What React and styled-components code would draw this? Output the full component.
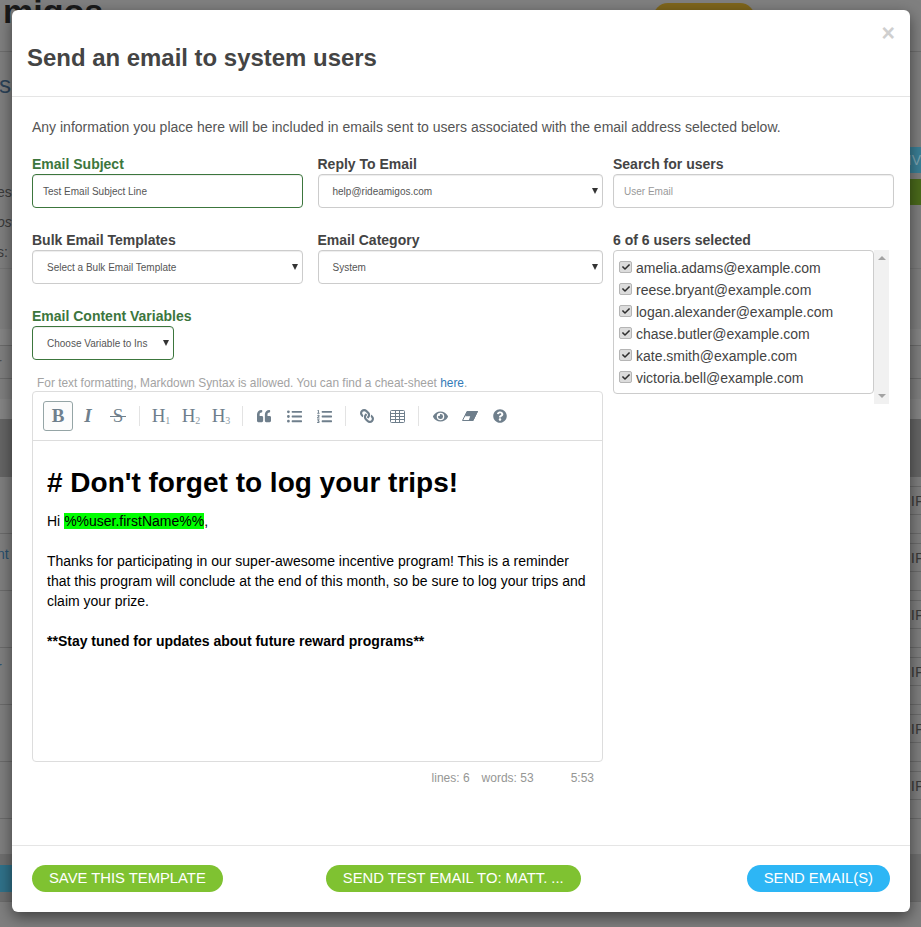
import React from "react";
import styled, { createGlobalStyle } from "styled-components";
import {
  FaQuoteLeft,
  FaListUl,
  FaListOl,
  FaLink,
  FaEye,
  FaQuestionCircle,
  FaCheck,
} from "react-icons/fa";

const Global = createGlobalStyle`
  html, body { margin: 0; padding: 0; }
  body { font-family: "Liberation Sans", Arial, sans-serif; }
  * { box-sizing: border-box; }
`;

const Page = styled.div`
  position: relative;
  width: 921px;
  height: 927px;
  overflow: hidden;
  background: #7f7f7f;
  color: #333;
`;

const TopBar = styled.div`
  height: 52px;
  border-bottom: 1px solid #6e6e6e;
  background: #808080;
  display: flex;
  align-items: flex-start;
  justify-content: space-between;
  padding: 3px 166px 0 3px;
`;

const BrandText = styled.div`
  font-size: 34px;
  line-height: 34px;
  font-weight: 700;
  margin-top: -9px;
  color: #1a1a1a;
`;

const YellowButton = styled.div`
  width: 102px;
  height: 30px;
  border-radius: 15px;
  background: #7f661c;
`;

const BackRow = styled.div`
  height: ${(p) => p.$h}px;
  display: flex;
  justify-content: space-between;
  align-items: flex-start;
  padding-top: ${(p) => p.$pad || 0}px;
  background: ${(p) => p.$bg || "transparent"};
  border-bottom: ${(p) => (p.$line ? `1px solid ${p.$line}` : "0")};
  overflow: hidden;
`;

const BackCrumb = styled.span`
  font-size: 24px;
  line-height: 28px;
  color: #2b4258;
  margin-left: -1px;
`;

const BackText = styled.div`
  font-size: 14px;
  line-height: 30px;
  color: #3b3b3b;
  margin-left: -3px;
  font-style: ${(p) => (p.$italic ? "italic" : "normal")};
`;

const BackLink = styled.span`
  font-size: 14px;
  line-height: 20px;
  color: #27506f;
  margin: ${(p) => p.$top}px 0 0 -3px;
`;

const BackStack = styled.div`
  display: flex;
  flex-direction: column;
`;

const BackAction = styled.div`
  width: 40px;
  height: 26px;
  margin-bottom: 6px;
  text-align: right;
  font-size: 14px;
  line-height: 26px;
  padding-right: 0;
  color: #7fa6b3;
  background: ${(p) => p.$bg};
  white-space: nowrap;
  overflow: hidden;
`;

const BackCell = styled.div`
  width: 40px;
  height: 29px;
  margin-top: 9px;
  border-top: 1px solid #6b6b6b;
  border-bottom: 1px solid #6b6b6b;
  display: flex;
  justify-content: flex-end;
  font-size: 15px;
  line-height: 27px;
  color: #3a3a3a;
  span { margin-right: -4px; }
`;

const BackBadge = styled.div`
  width: 40px;
  height: 27px;
  margin-top: 11px;
  background: #30728a;
  color: #75a5b5;
  font-size: 14px;
  line-height: 27px;
  text-align: right;
  overflow: hidden;
  white-space: nowrap;
`;

const ModalBox = styled.div`
  position: absolute;
  left: 12px;
  top: 10px;
  width: 898px;
  height: 902px;
  display: flex;
  flex-direction: column;
  background: #fff;
  border-radius: 6px;
  box-shadow: 0 5px 15px rgba(0, 0, 0, 0.5);
`;

const ModalHeader = styled.div`
  position: relative;
  height: 87px;
  flex: none;
  padding: 33px 15px 0;
  border-bottom: 1px solid #e5e5e5;
`;

const Title = styled.h4`
  margin: 0;
  font-size: 23.95px;
  line-height: 30px;
  font-weight: 700;
  color: #444;
`;

const Close = styled.span`
  position: absolute;
  top: 13px;
  right: 15px;
  font-size: 23px;
  line-height: 21px;
  font-weight: 700;
  color: #cfcfcf;
`;

const ModalBody = styled.div`
  flex: 1;
  padding: 20px 20px 0;
`;

const Intro = styled.p`
  margin: 0;
  font-size: 14px;
  line-height: 20px;
  color: #555;
`;

const TopGrid = styled.div`
  display: grid;
  grid-template-columns: 271px 285.5px 276px;
  column-gap: 14.5px;
  margin-top: 18px;
  & > :nth-child(3n) { margin-left: -4.5px; }
`;

const Field = styled.div`
  display: flex;
  flex-direction: column;
  height: ${(p) => p.$h || 76}px;
`;

const Label = styled.label`
  font-size: 14px;
  line-height: 16px;
  font-weight: 700;
  margin: 1px 0 2px;
  color: ${(p) => (p.$green ? "#3c763d" : "#444")};
`;

const Control = styled.div`
  position: relative;
  width: ${(p) => p.$width || "100%"};
  height: 34px;
  flex: none;
  padding: 0 ${(p) => (p.$select ? "14px" : "10px")};
  display: flex;
  align-items: center;
  font-size: 10px;
  color: ${(p) => p.$color || "#555"};
  background: #fff;
  border: 1px solid ${(p) => (p.$green ? "#3c763d" : "#ccc")};
  border-radius: 4px;
  box-shadow: inset 0 1px 1px rgba(0, 0, 0, 0.075);
  white-space: nowrap;
  overflow: hidden;
`;

const Arrow = styled.span`
  position: absolute;
  right: 4px;
  top: 13px;
  width: 0;
  height: 0;
  border-left: 3px solid transparent;
  border-right: 3px solid transparent;
  border-top: 6px solid #333;
`;

const ListWrap = styled.div`
  display: flex;
  flex: none;
  width: 276px;
  height: 154px;
`;

const UserList = styled.div`
  width: 261px;
  height: 144px;
  border: 1px solid #ccc;
  border-radius: 4px;
  padding: 6px 0 0 5px;
`;

const UserRow = styled.label`
  display: flex;
  align-items: flex-start;
  height: 22px;
  font-size: 14px;
  line-height: 22px;
  color: #444;
`;

const Check = styled.span`
  width: 13px;
  height: 12px;
  margin: 4px 4px 0 0;
  flex: none;
  display: flex;
  align-items: center;
  justify-content: center;
  border: 1px solid #b5b5b5;
  border-radius: 2px;
  background: #dcdcdc;
  color: #2e2e2e;
`;

const ScrollTrack = styled.div`
  width: 15px;
  background: #f1f1f1;
  display: flex;
  flex-direction: column;
  justify-content: space-between;
  align-items: center;
  padding: 6px 0;
`;

const ScrollArrow = styled.span`
  width: 0;
  height: 0;
  border-left: 4px solid transparent;
  border-right: 4px solid transparent;
  border-${(p) => (p.$up ? "bottom" : "top")}: 4px solid #a3a3a3;
`;

const RowTwo = styled.div`
  display: grid;
  grid-template-columns: 571px 276px;
  column-gap: 10px;
`;

const LeftCol = styled.div`
  display: flex;
  flex-direction: column;
`;

const RowTwoInner = styled.div`
  display: grid;
  grid-template-columns: 271px 285.5px;
  column-gap: 14.5px;
`;

const Hint = styled.div`
  margin-left: 5px;
  font-size: 11.9px;
  line-height: 14px;
  height: 15px;
  color: #a3a3a3;
  a { color: #337ab7; text-decoration: none; }
`;

const Editor = styled.div`
  width: 571px;
  height: 371px;
  border: 1px solid #ddd;
  border-radius: 4px;
  display: flex;
  flex-direction: column;
`;

const Toolbar = styled.div`
  height: 49px;
  flex: none;
  border-bottom: 1px solid #ddd;
  display: flex;
  align-items: center;
  padding: 0 10px;
  color: #6f7f8c;
`;

const ToolButton = styled.div`
  position: relative;
  width: 30px;
  height: 30px;
  flex: none;
  display: flex;
  align-items: center;
  justify-content: center;
  border-radius: 3px;
  border: 1px solid ${(p) => (p.$active ? "#95a5a6" : "transparent")};
  background: ${(p) => (p.$active ? "#fcfcfc" : "transparent")};
  font-family: "Liberation Serif", "DejaVu Serif", serif;
  font-size: 19px;
  font-weight: ${(p) => (p.$bold ? 700 : 400)};
  font-style: ${(p) => (p.$italic ? "italic" : "normal")};
  svg { display: block; }
`;

const StrikeLine = styled.span`
  position: absolute;
  left: 6px;
  right: 6px;
  top: 14px;
  height: 1px;
  background: currentColor;
`;

const HeadGlyph = styled.span`
  white-space: nowrap;
  sub { font-size: 10px; line-height: 0; vertical-align: -2px; opacity: 0.8; }
`;

const Separator = styled.span`
  width: 1px;
  height: 20px;
  flex: none;
  background: #e3e3e3;
  margin: 0 6px;
`;

const EditorBody = styled.div`
  flex: 1;
  padding: 24px 14px 0;
  color: #000;
  font-size: 14px;
  line-height: 20px;
`;

const Heading = styled.div`
  font-size: 28px;
  line-height: 36px;
  font-weight: 700;
  margin-bottom: 10px;
`;

const Line = styled.div`
  min-height: 20px;
  font-weight: ${(p) => (p.$bold ? 700 : 400)};
`;

const Mark = styled.span`
  background: #00ff00;
`;

const StatusBar = styled.div`
  display: flex;
  justify-content: flex-end;
  width: 571px;
  padding: 9px 9px 0 0;
  font-size: 12px;
  line-height: 14px;
  color: #959694;
`;

const Stat = styled.span`
  margin-left: ${(p) => p.$gap || 12}px;
`;

const ModalFooter = styled.div`
  height: 67px;
  flex: none;
  border-top: 1px solid #e5e5e5;
  display: flex;
  align-items: center;
  padding: 0 20px 2px;
`;

const PillButton = styled.button`
  height: 27px;
  padding: 0 17px;
  margin-left: ${(p) => p.$ml || "0"};
  border: 0;
  border-radius: 14px;
  background: ${(p) => (p.$blue ? "#2db6f5" : "#7fc231")};
  color: #fff;
  font-family: "Liberation Sans", Arial, sans-serif;
  font-size: 14.8px;
  line-height: 27px;
  white-space: nowrap;
`;

const users = [
  "amelia.adams@example.com",
  "reese.bryant@example.com",
  "logan.alexander@example.com",
  "chase.butler@example.com",
  "kate.smith@example.com",
  "victoria.bell@example.com",
];

const TableIcon = () => (
  <svg width="15" height="13" viewBox="0 0 15 13" fill="none" stroke="currentColor" strokeWidth="1">
    <rect x="0.5" y="0.5" width="14" height="12" rx="1" />
    <path d="M0.5 3.5H14.5M0.5 6.5H14.5M0.5 9.5H14.5M5.5 0.5V12.5M9.5 0.5V12.5" />
  </svg>
);

const EraserIcon = () => (
  <svg width="16" height="10" viewBox="0 0 16 10">
    <path d="M5 0.5H15.5L11 9.5H0.5Z" fill="#fff" stroke="currentColor" strokeWidth="1" />
    <path d="M5 0H16L11.2 10H6.5L8.2 5.2H3Z" fill="currentColor" />
  </svg>
);

const LinkIcon = styled(FaLink)`
  transform: scaleX(-1);
`;

const rows = [
  { key: 1, link: null },
  { key: 2, link: "nt", top: 10 },
  { key: 3, link: null },
  { key: 4, link: "r", top: 9 },
  { key: 5, link: null },
  { key: 6, link: null },
];

export default function App() {
  return (
    <Page>
      <Global />
      <TopBar>
        <BrandText>migos</BrandText>
        <YellowButton />
      </TopBar>
      <BackRow $h={95} $pad={19}>
        <BackCrumb>s /</BackCrumb>
      </BackRow>
      <BackRow $h={122} $line="#757575">
        <BackStack>
          <BackText>&nbsp;</BackText>
          <BackText>es</BackText>
          <BackText $italic>os</BackText>
          <BackText>s:</BackText>
        </BackStack>
        <BackStack>
          <BackAction $bg="#3a7f96">ATIV</BackAction>
          <BackAction $bg="#4a6a1b" />
        </BackStack>
      </BackRow>
      <BackRow $h={60} />
      <BackRow $h={17} $bg="#858585" $line="#6b6b6b" />
      <BackRow $h={33} $line="#6b6b6b">
        <BackLink $top={7} style={{ color: "#4c4c4c" }}>r</BackLink>
      </BackRow>
      <BackRow $h={20} />
      <BackRow $h={20} $bg="#858585" />
      <BackRow $h={58} $bg="#656565" />
      {rows.map((r) => (
        <BackRow key={r.key} $h={57} $line="#6b6b6b">
          {r.link ? <BackLink $top={r.top}>{r.link}</BackLink> : <span />}
          <BackCell>
            <span>IP</span>
          </BackCell>
        </BackRow>
      ))}
      <BackRow $h={35} />
      <BackRow $h={48} $bg="#6f6f6f" $line="#6b6b6b">
        <BackBadge>EM</BackBadge>
      </BackRow>
      <ModalBox>
        <ModalHeader>
          <Title>Send an email to system users</Title>
          <Close>×</Close>
        </ModalHeader>
        <ModalBody>
          <Intro>
            Any information you place here will be included in emails sent to users associated with the email address selected below.
          </Intro>
          <TopGrid>
            <Field>
              <Label $green>Email Subject</Label>
              <Control $green>Test Email Subject Line</Control>
            </Field>
            <Field>
              <Label>Reply To Email</Label>
              <Control $select>
                help@rideamigos.com
                <Arrow />
              </Control>
            </Field>
            <Field>
              <Label>Search for users</Label>
              <Control $color="#999">User Email</Control>
            </Field>
          </TopGrid>
          <RowTwo>
            <LeftCol>
              <RowTwoInner>
                <Field>
                  <Label>Bulk Email Templates</Label>
                  <Control $select>
                    Select a Bulk Email Template
                    <Arrow />
                  </Control>
                </Field>
                <Field>
                  <Label>Email Category</Label>
                  <Control $select>
                    System
                    <Arrow />
                  </Control>
                </Field>
              </RowTwoInner>
              <Field $h={69}>
                <Label $green>Email Content Variables</Label>
                <Control $select $green $width="142px">
                  Choose Variable to Ins
                  <Arrow />
                </Control>
              </Field>
              <Hint>
                For text formatting, Markdown Syntax is allowed. You can find a cheat-sheet <a href="#here">here</a>.
              </Hint>
              <Editor>
                <Toolbar>
                  <ToolButton $active $bold>B</ToolButton>
                  <ToolButton $italic $bold>I</ToolButton>
                  <ToolButton>S<StrikeLine /></ToolButton>
                  <Separator />
                  <ToolButton><HeadGlyph>H<sub>1</sub></HeadGlyph></ToolButton>
                  <ToolButton><HeadGlyph>H<sub>2</sub></HeadGlyph></ToolButton>
                  <ToolButton><HeadGlyph>H<sub>3</sub></HeadGlyph></ToolButton>
                  <Separator />
                  <ToolButton><FaQuoteLeft size={14} /></ToolButton>
                  <ToolButton><FaListUl size={15} /></ToolButton>
                  <ToolButton><FaListOl size={15} /></ToolButton>
                  <Separator />
                  <ToolButton><LinkIcon size={14} /></ToolButton>
                  <ToolButton><TableIcon /></ToolButton>
                  <Separator />
                  <ToolButton><FaEye size={15} /></ToolButton>
                  <ToolButton><EraserIcon /></ToolButton>
                  <ToolButton><FaQuestionCircle size={14} /></ToolButton>
                </Toolbar>
                <EditorBody>
                  <Heading># Don't forget to log your trips!</Heading>
                  <Line>Hi <Mark>%%user.firstName%%</Mark>,</Line>
                  <Line />
                  <Line>Thanks for participating in our super-awesome incentive program! This is a reminder that this program will conclude at the end of this month, so be sure to log your trips and claim your prize.</Line>
                  <Line />
                  <Line $bold>**Stay tuned for updates about future reward programs**</Line>
                </EditorBody>
              </Editor>
              <StatusBar>
                <Stat>lines: 6</Stat>
                <Stat>words: 53</Stat>
                <Stat $gap={37}>5:53</Stat>
              </StatusBar>
            </LeftCol>
            <Field>
              <Label>6 of 6 users selected</Label>
              <ListWrap>
                <UserList>
                  {users.map((u) => (
                    <UserRow key={u}>
                      <Check><FaCheck size={8} /></Check>
                      {u}
                    </UserRow>
                  ))}
                </UserList>
                <ScrollTrack>
                  <ScrollArrow $up />
                  <ScrollArrow />
                </ScrollTrack>
              </ListWrap>
            </Field>
          </RowTwo>
        </ModalBody>
        <ModalFooter>
          <PillButton>SAVE THIS TEMPLATE</PillButton>
          <PillButton $ml="103px">SEND TEST EMAIL TO: MATT. ...</PillButton>
          <PillButton $blue $ml="auto">SEND EMAIL(S)</PillButton>
        </ModalFooter>
      </ModalBox>
    </Page>
  );
}
